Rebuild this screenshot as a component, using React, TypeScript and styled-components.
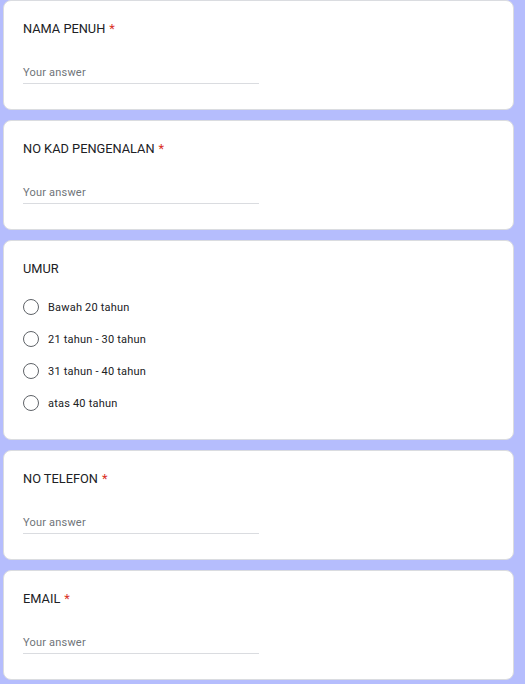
import React from 'react'
import styled, { createGlobalStyle } from 'styled-components'

const GlobalStyle = createGlobalStyle`
  html, body {
    margin: 0;
    padding: 0;
    background: #b5bdfd;
  }
  body {
    font-family: Roboto, 'Liberation Sans', Arial, sans-serif;
  }
`

const Page = styled.div`
  display: flex;
  flex-direction: column;
  gap: 10px;
  width: 511px;
  padding: 0 0 4px 3px;
`

const Card = styled.section<{ $bottom?: number }>`
  background: #fff;
  border: 1px solid #dadce0;
  border-radius: 8px;
  padding: 18px 19px ${p => p.$bottom ?? 25}px;
`

const Title = styled.div`
  font-size: 12.8px;
  line-height: 20px;
  color: #202124;
`

const Required = styled.span`
  color: #d93025;
  margin-left: 4px;
`

const Answer = styled.div`
  margin-top: 26px;
  width: 236px;
  font-size: 11px;
  letter-spacing: 0.2px;
  line-height: 16px;
  color: #70757a;
  padding-bottom: 2px;
  border-bottom: 1px solid #dadce0;
`

const Options = styled.div`
  margin-top: 12px;
  display: flex;
  flex-direction: column;
`

const Option = styled.label`
  display: flex;
  align-items: center;
  height: 32px;
  gap: 9px;
  font-size: 11px;
  letter-spacing: 0.2px;
  color: #202124;
`

const Radio = styled.span`
  width: 16px;
  height: 16px;
  box-sizing: border-box;
  border: 1.5px solid #5f6368;
  border-radius: 50%;
  flex-shrink: 0;
`

const TextQuestion = ({ title, required }: { title: string; required?: boolean }) => (
  <Card>
    <Title>
      {title}
      {required && <Required>*</Required>}
    </Title>
    <Answer>Your answer</Answer>
  </Card>
)

const ages = ['Bawah 20 tahun', '21 tahun - 30 tahun', '31 tahun - 40 tahun', 'atas 40 tahun']

export default function App() {
  return (
    <>
      <GlobalStyle />
      <Page>
        <TextQuestion title="NAMA PENUH" required />
        <TextQuestion title="NO KAD PENGENALAN" required />
        <Card $bottom={20}>
          <Title>UMUR</Title>
          <Options>
            {ages.map(a => (
              <Option key={a}>
                <Radio />
                {a}
              </Option>
            ))}
          </Options>
        </Card>
        <TextQuestion title="NO TELEFON" required />
        <TextQuestion title="EMAIL" required />
      </Page>
    </>
  )
}
